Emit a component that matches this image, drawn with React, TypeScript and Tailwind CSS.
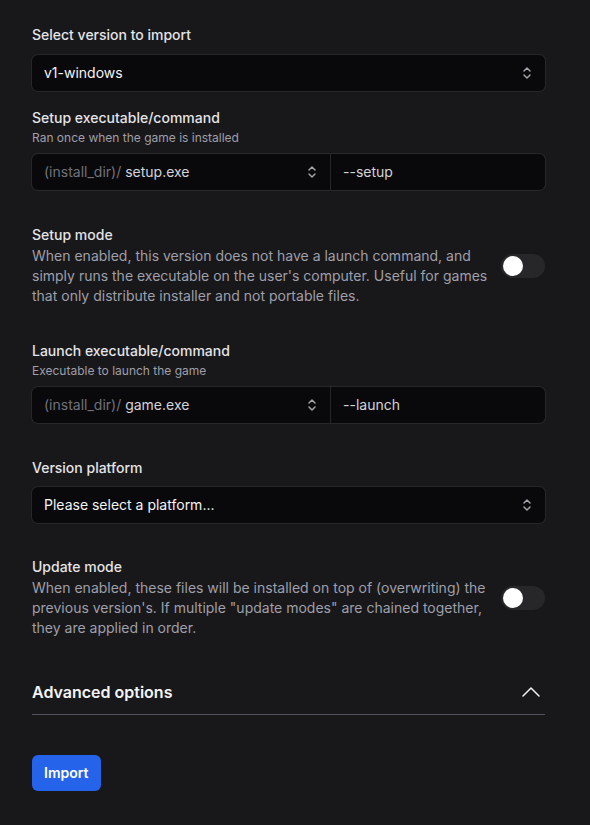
import React, { useState } from 'react';

function UpDown() {
  return (
    <svg width="12" height="16" viewBox="0 0 12 16" fill="none" stroke="#a1a1aa" strokeWidth="1.5" strokeLinecap="round" strokeLinejoin="round">
      <path d="M3 6l3-3 3 3" />
      <path d="M3 10l3 3 3-3" />
    </svg>
  );
}

function Toggle({ on, onChange }: { on: boolean; onChange: (v: boolean) => void }) {
  return (
    <button
      onClick={() => onChange(!on)}
      className={`relative h-6 w-11 shrink-0 rounded-full ${on ? 'bg-[#2563eb]' : 'bg-zinc-800'}`}
    >
      <span
        className={`absolute top-0.5 h-5 w-5 rounded-full bg-white ${on ? 'left-[22px]' : 'left-0.5'}`}
      />
    </button>
  );
}

function SplitCommand({ file, arg }: { file: string; arg: string }) {
  return (
    <div className="mt-2 flex h-9 rounded-md bg-zinc-950 ring-1 ring-zinc-800">
      <div className="flex w-[299px] items-center justify-between border-r border-zinc-800 pl-3 pr-3">
        <span className="text-sm">
          <span className="text-zinc-500">(install_dir)/ </span>
          <span className="text-zinc-300">{file}</span>
        </span>
        <UpDown />
      </div>
      <div className="flex flex-1 items-center px-3 text-sm text-zinc-300">{arg}</div>
    </div>
  );
}

function Select({ value }: { value: string }) {
  return (
    <div className="flex h-9 items-center justify-between rounded-md bg-zinc-950 pl-3 pr-3 text-sm text-zinc-100 ring-1 ring-zinc-800">
      <span>{value}</span>
      <UpDown />
    </div>
  );
}

export default function App() {
  const [setupMode, setSetupMode] = useState(false);
  const [updateMode, setUpdateMode] = useState(false);

  return (
    <div
      className="min-h-[825px] bg-[#18181b] pl-8 pr-[45px] pt-[25px] pb-8 text-zinc-100"
      style={{ fontFamily: 'Inter, "Noto Sans", sans-serif' }}
    >
      <div>
        <p className="text-sm font-medium leading-5 text-zinc-200">Select version to import</p>
        <div className="mt-2.5">
          <Select value="v1-windows" />
        </div>
      </div>

      <div className="mt-[17px]">
        <p className="text-sm font-medium leading-5 text-zinc-200">Setup executable/command</p>
        <p className="mt-0.5 text-xs leading-4 text-zinc-400">Ran once when the game is installed</p>
        <SplitCommand file="setup.exe" arg="--setup" />
      </div>

      <div className="mt-[35px] flex items-center gap-2">
        <div className="flex-1">
          <p className="text-sm font-medium leading-5 text-zinc-200">Setup mode</p>
          <p className="mt-px text-sm leading-5 text-zinc-400">
            When enabled, this version does not have a launch command, and simply runs the executable on the user's computer. Useful for games that only distribute installer and not portable files.
          </p>
        </div>
        <Toggle on={setupMode} onChange={setSetupMode} />
      </div>

      <div className="mt-[35px]">
        <p className="text-sm font-medium leading-5 text-zinc-200">Launch executable/command</p>
        <p className="mt-0.5 text-xs leading-4 text-zinc-400">Executable to launch the game</p>
        <SplitCommand file="game.exe" arg="--launch" />
      </div>

      <div className="mt-[35px]">
        <p className="text-sm font-medium leading-5 text-zinc-200">Version platform</p>
        <div className="mt-[9px]">
          <Select value="Please select a platform..." />
        </div>
      </div>

      <div className="mt-[34px] flex items-center gap-2">
        <div className="flex-1">
          <p className="text-sm font-medium leading-5 text-zinc-200">Update mode</p>
          <p className="mt-px text-sm leading-5 text-zinc-400">
            When enabled, these files will be installed on top of (overwriting) the previous version's. If multiple "update modes" are chained together, they are applied in order.
          </p>
        </div>
        <Toggle on={updateMode} onChange={setUpdateMode} />
      </div>

      <div className="mt-[42px] flex items-center justify-between border-b border-zinc-600 pb-2.5">
        <span className="text-base font-semibold leading-6 text-zinc-100">Advanced options</span>
        <svg width="20" height="20" viewBox="0 0 20 20" fill="none" stroke="#f4f4f5" strokeWidth="1.5" strokeLinecap="round" strokeLinejoin="round" className="mr-1">
          <path d="M2 14l8-8 8 8" />
        </svg>
      </div>

      <button className="mt-10 h-9 rounded-md bg-[#2563eb] px-3 text-sm font-semibold text-white">
        Import
      </button>
    </div>
  );
}
